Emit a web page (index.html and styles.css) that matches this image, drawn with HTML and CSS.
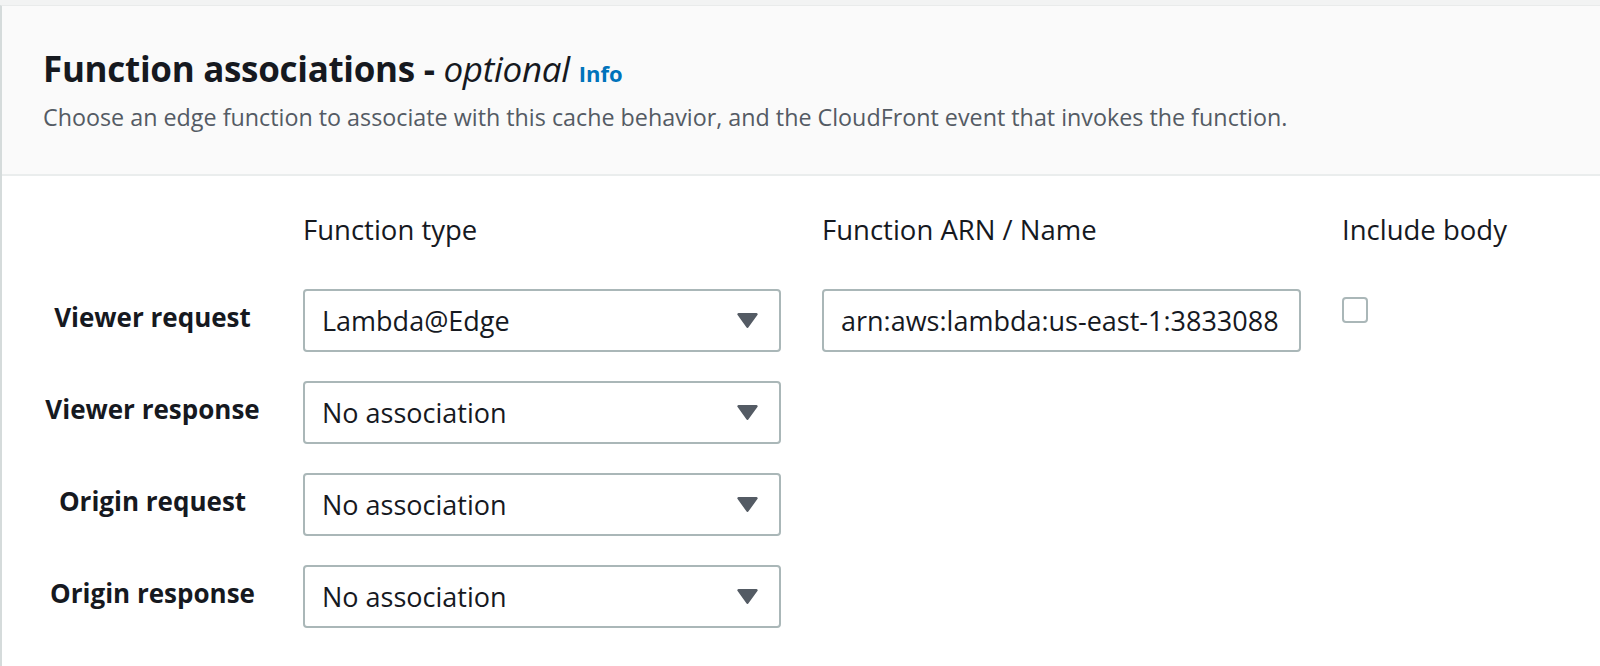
FILE: index.html
```html
<!DOCTYPE html>
<html lang="en">
<head>
<meta charset="utf-8">
<title>Function associations</title>
<link rel="stylesheet" href="styles.css">
</head>
<body>
<section class="card">
  <header class="card-header">
    <h2 class="title">Function associations - <em>optional</em> <a class="info" href="#">Info</a></h2>
    <p class="desc">Choose an edge function to associate with this cache behavior, and the CloudFront event that invokes the function.</p>
  </header>
  <div class="card-body">
    <div class="grid">
      <div class="col-head spacer"></div>
      <div class="col-head">Function type</div>
      <div class="col-head">Function ARN / Name</div>
      <div class="col-head">Include body</div>

      <div class="row-label">Viewer request</div>
      <div class="select"><span>Lambda@Edge</span><svg class="caret" viewBox="0 0 21 15" width="21" height="15"><path d="M1.6 0h17.8a1.3 1.3 0 0 1 1 2.1l-8.9 12.2a1.3 1.3 0 0 1-2.1 0L.6 2.1A1.3 1.3 0 0 1 1.6 0z" fill="#545b64"/></svg></div>
      <div class="input"><span class="input-text">arn:aws:lambda:us-east-1:3833088</span></div>
      <div class="check-cell"><span class="checkbox"></span></div>

      <div class="row-label">Viewer response</div>
      <div class="select"><span>No association</span><svg class="caret" viewBox="0 0 21 15" width="21" height="15"><path d="M1.6 0h17.8a1.3 1.3 0 0 1 1 2.1l-8.9 12.2a1.3 1.3 0 0 1-2.1 0L.6 2.1A1.3 1.3 0 0 1 1.6 0z" fill="#545b64"/></svg></div>
      <div class="empty"></div>
      <div class="empty"></div>

      <div class="row-label">Origin request</div>
      <div class="select"><span>No association</span><svg class="caret" viewBox="0 0 21 15" width="21" height="15"><path d="M1.6 0h17.8a1.3 1.3 0 0 1 1 2.1l-8.9 12.2a1.3 1.3 0 0 1-2.1 0L.6 2.1A1.3 1.3 0 0 1 1.6 0z" fill="#545b64"/></svg></div>
      <div class="empty"></div>
      <div class="empty"></div>

      <div class="row-label">Origin response</div>
      <div class="select"><span>No association</span><svg class="caret" viewBox="0 0 21 15" width="21" height="15"><path d="M1.6 0h17.8a1.3 1.3 0 0 1 1 2.1l-8.9 12.2a1.3 1.3 0 0 1-2.1 0L.6 2.1A1.3 1.3 0 0 1 1.6 0z" fill="#545b64"/></svg></div>
      <div class="empty"></div>
      <div class="empty"></div>
    </div>
  </div>
</section>
</body>
</html>
```
FILE: styles.css
```css
* { box-sizing: border-box; }
html, body { margin: 0; padding: 0; }
body {
  background: #f2f3f3;
  font-family: "Open Sans", "Noto Sans", sans-serif;
  color: #16191f;
  height: 666px;
  overflow: hidden;
}
.card {
  margin-top: 5px;
  background: #ffffff;
  border-top: 1px solid #e9ebeb;
  border-left: 2px solid #d5dbdb;
  height: 661px;
}
.card-header {
  background: #fafafa;
  border-bottom: 2px solid #eaeded;
  height: 170px;
  padding: 40px 0 0 41px;
}
.title {
  margin: 0;
  font-size: 35px;
  font-weight: 700;
  line-height: 46px;
  letter-spacing: -0.3px;
}
.title em { font-weight: 400; }
.info {
  color: #0073bb;
  font-size: 22px;
  font-weight: 700;
  text-decoration: none;
  letter-spacing: 0;
}
.desc {
  margin: 6px 0 0 0;
  font-size: 23.3px;
  line-height: 30px;
  color: #545b64;
}
.card-body { padding-top: 35px; }
.grid {
  display: grid;
  grid-template-columns: 260px 478px 479px 250px;
  column-gap: 41px;
  row-gap: 29px;
}
.col-head {
  font-size: 27.5px;
  line-height: 38px;
  height: 38px;
  margin-bottom: 11px;
  white-space: nowrap;
}
.row-label {
  font-size: 26px;
  font-weight: 700;
  white-space: nowrap;
  margin-right: -41px;
  display: flex;
  align-items: center;
  justify-content: center;
  padding-bottom: 8px;
}
.select, .input {
  height: 63px;
  border: 2px solid #aab7b8;
  border-radius: 4px;
  display: flex;
  align-items: center;
  padding: 0 21px 0 17px;
  font-size: 27px;
  background: #fff;
  white-space: nowrap;
  overflow: hidden;
}
.input { padding-right: 8px; }
.select { justify-content: space-between; }
.caret { display: block; flex: none; }
.check-cell { padding-top: 8px; }
.checkbox {
  display: block;
  width: 26px;
  height: 26px;
  border: 2px solid #aab7b8;
  border-radius: 4px;
}
```
